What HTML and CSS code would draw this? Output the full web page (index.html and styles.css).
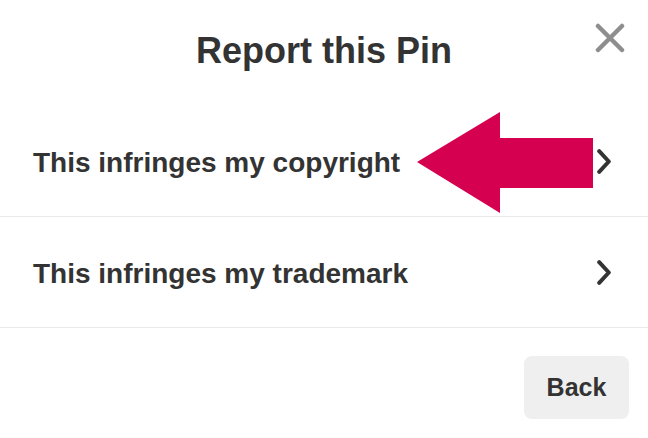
FILE: index.html
```html
<!DOCTYPE html>
<html>
<head>
    <title>Report this Pin</title>
    <link rel="stylesheet" href="styles.css">
</head>
<body>
    <div class="modal">
        <header class="modal-header">
            <span></span>
            <h1 class="modal-title">Report this Pin</h1>
            <button class="close-button" aria-label="Close">
                <svg width="30" height="30" viewBox="0 0 30 30">
                    <path d="M3 3 L27 27 M27 3 L3 27" stroke="#8e8e8e" stroke-width="4.5" stroke-linecap="round" fill="none"/>
                </svg>
            </button>
        </header>
        <ul class="reason-list">
            <li class="reason-row">
                <span class="reason-text">This infringes my copyright</span>
                <svg class="chevron" width="14" height="25" viewBox="0 0 14 25">
                    <polyline points="2.2,2.2 11.8,12.5 2.2,22.8" stroke="#333" stroke-width="4" stroke-linecap="round" stroke-linejoin="round" fill="none"/>
                </svg>
                <!-- pointer drawn over the row -->
                <svg class="pointer-arrow" width="176" height="101" viewBox="0 0 176 101">
                    <polygon points="0,50 83,0 83,26 176,26 176,76 83,76 83,101" fill="#d50050"/>
                </svg>
            </li>
            <li class="reason-row">
                <span class="reason-text">This infringes my trademark</span>
                <svg class="chevron" width="14" height="25" viewBox="0 0 14 25">
                    <polyline points="2.2,2.2 11.8,12.5 2.2,22.8" stroke="#333" stroke-width="4" stroke-linecap="round" stroke-linejoin="round" fill="none"/>
                </svg>
            </li>
        </ul>
        <footer class="modal-footer">
            <button class="back-button">Back</button>
        </footer>
    </div>
</body>
</html>
```

FILE: styles.css
```css
body {
    margin: 0;
    padding: 0;
    background-color: #fff;
    font-family: "Liberation Sans", Arial, sans-serif;
    color: #333;
}
.modal {
    width: 648px;
}
.modal-header {
    display: grid;
    grid-template-columns: 1fr auto 1fr;
    align-items: start;
    height: 106px;
    box-sizing: border-box;
    padding: 23px 23px 0 23px;
}
.modal-title {
    margin: 10px 0 0 0;
    font-size: 36px;
    line-height: 36px;
    font-weight: bold;
    color: #333;
}
.close-button {
    justify-self: end;
    width: 30px;
    height: 30px;
    padding: 0;
    border: none;
    background: none;
    cursor: pointer;
}
.close-button svg {
    display: block;
}
.reason-list {
    list-style: none;
    margin: 0;
    padding: 0;
}
.reason-row {
    position: relative;
    display: flex;
    align-items: center;
    justify-content: space-between;
    height: 110px;
    padding: 0 37px 0 33px;
    border-bottom: 1px solid #e9e9e9;
}
.reason-text {
    font-size: 28px;
    font-weight: bold;
    padding-top: 3px;
}
.chevron {
    display: block;
}
.pointer-arrow {
    position: absolute;
    left: 417px;
    top: 6px;
}
.modal-footer {
    display: flex;
    justify-content: flex-end;
    padding: 28px 19px 0 0;
}
.back-button {
    width: 105px;
    height: 63px;
    border: none;
    border-radius: 8px;
    background-color: #efefef;
    color: #333;
    font-family: "Liberation Sans", Arial, sans-serif;
    font-size: 25px;
    font-weight: bold;
    cursor: pointer;
}
```
